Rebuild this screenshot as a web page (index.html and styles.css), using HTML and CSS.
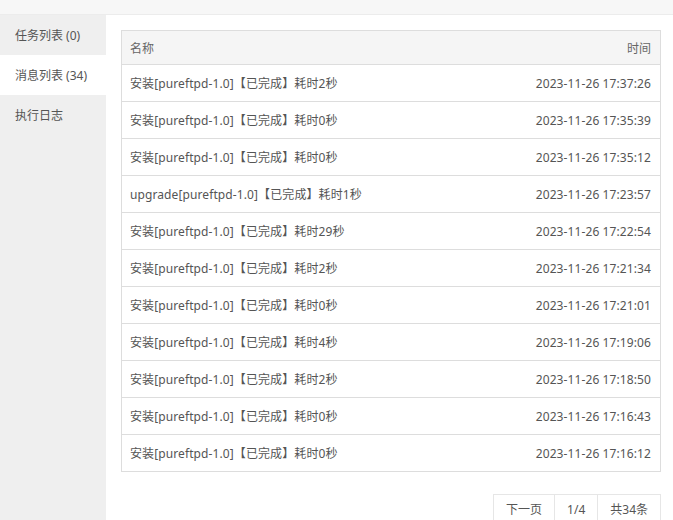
FILE: index.html
```html
<!DOCTYPE html>
<html lang="zh-CN">
<head>
<meta charset="utf-8">
<title>消息列表</title>
<link rel="stylesheet" href="styles.css">
</head>
<body>
<div class="topbar"></div>
<div class="layout">
  <aside class="sidebar">
    <div class="tab">任务列表 (0)</div>
    <div class="tab active">消息列表 (34)</div>
    <div class="tab">执行日志</div>
  </aside>
  <main class="content">
    <table class="msg-table">
      <thead>
        <tr><th class="name">名称</th><th class="time">时间</th></tr>
      </thead>
      <tbody>
        <tr><td>安装[pureftpd-1.0]【已完成】耗时2秒</td><td class="time">2023-11-26 17:37:26</td></tr>
        <tr><td>安装[pureftpd-1.0]【已完成】耗时0秒</td><td class="time">2023-11-26 17:35:39</td></tr>
        <tr><td>安装[pureftpd-1.0]【已完成】耗时0秒</td><td class="time">2023-11-26 17:35:12</td></tr>
        <tr><td>upgrade[pureftpd-1.0]【已完成】耗时1秒</td><td class="time">2023-11-26 17:23:57</td></tr>
        <tr><td>安装[pureftpd-1.0]【已完成】耗时29秒</td><td class="time">2023-11-26 17:22:54</td></tr>
        <tr><td>安装[pureftpd-1.0]【已完成】耗时2秒</td><td class="time">2023-11-26 17:21:34</td></tr>
        <tr><td>安装[pureftpd-1.0]【已完成】耗时0秒</td><td class="time">2023-11-26 17:21:01</td></tr>
        <tr><td>安装[pureftpd-1.0]【已完成】耗时4秒</td><td class="time">2023-11-26 17:19:06</td></tr>
        <tr><td>安装[pureftpd-1.0]【已完成】耗时2秒</td><td class="time">2023-11-26 17:18:50</td></tr>
        <tr><td>安装[pureftpd-1.0]【已完成】耗时0秒</td><td class="time">2023-11-26 17:16:43</td></tr>
        <tr><td>安装[pureftpd-1.0]【已完成】耗时0秒</td><td class="time">2023-11-26 17:16:12</td></tr>
      </tbody>
    </table>
    <div class="pager">
      <span class="pg">下一页</span>
      <span class="pg">1/4</span>
      <span class="pg">共34条</span>
    </div>
  </main>
</div>
</body>
</html>
```
FILE: styles.css
```css
html, body {
  margin: 0;
  padding: 0;
  height: 100%;
  overflow: hidden;
}
body {
  font-family: "Noto Sans", "Noto Sans CJK SC", sans-serif;
  font-size: 12px;
  color: #333;
  background: #fff;
}
.topbar {
  height: 14px;
  background: #f7f7f7;
  border-bottom: 1px solid #ececec;
}
.layout {
  display: flex;
  height: calc(100% - 15px);
}
.sidebar {
  width: 106px;
  flex: none;
  background: #efefef;
}
.tab {
  height: 40px;
  line-height: 42px;
  padding-left: 15px;
  color: #555;
  font-size: 12px;
}
.tab.active {
  background: #fff;
}
.content {
  flex: 1;
  padding: 15px 12px 0 15px;
}
.msg-table {
  width: 100%;
  border-collapse: collapse;
  border: 1px solid #ddd;
}
.msg-table th {
  background: #f5f5f5;
  font-weight: normal;
  color: #666;
  height: 33px;
  padding: 0 9px 0 8px;
  text-align: left;
  border-bottom: 1px solid #ddd;
}
.msg-table th.time,
.msg-table td.time {
  text-align: right;
}
.msg-table td {
  height: 36px;
  padding: 0 9px 0 8px;
  color: #555;
  border-bottom: 1px solid #ddd;
  white-space: nowrap;
  letter-spacing: 0.1px;
}
.pager {
  display: flex;
  justify-content: flex-end;
  margin-top: 22px;
}
.pg {
  border: 1px solid #e6e6e6;
  margin-left: -1px;
  height: 30px;
  line-height: 30px;
  padding: 0 12px;
  color: #555;
}
```
